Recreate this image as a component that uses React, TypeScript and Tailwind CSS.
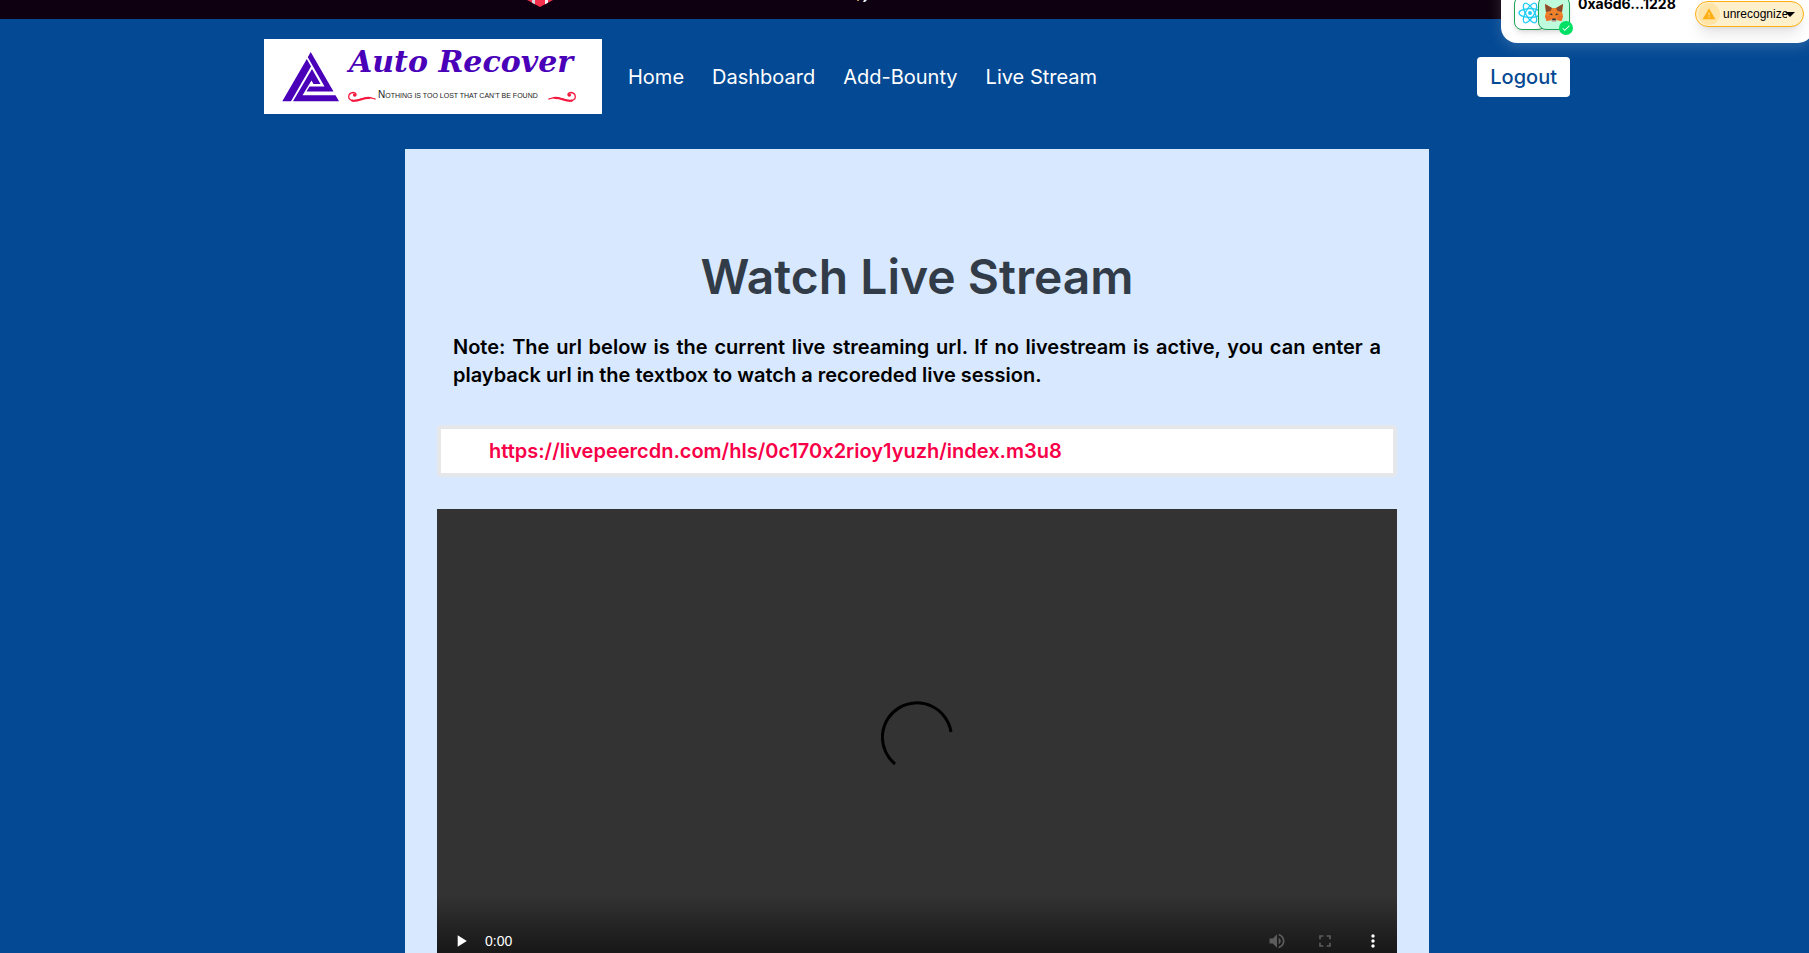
import React from "react";
import { MdPlayArrow, MdVolumeUp, MdFullscreen, MdMoreVert, MdArrowDropDown, MdCheck, MdWarning } from "react-icons/md";

const navItems = ["Home", "Dashboard", "Add-Bounty", "Live Stream"];

function Flourish({ flip = false }: { flip?: boolean }) {
  return (
    <g transform={flip ? "translate(396 0) scale(-1 1)" : undefined} fill="none" stroke="#f5183f" strokeLinecap="round">
      <path d="M91 57 C93 56 92 53.500 89 53.500 C84 54 83 60 88 61.500 C94 63 98 58.500 104 58.500 C107 58.500 109 59.500 111 60" strokeWidth="1.300" />
      <path d="M88 61.500 C94 63 98 58.800 105 59" strokeWidth="2.200" />
      <circle cx="90.500" cy="56" r="1.600" fill="#f5183f" stroke="none" />
    </g>
  );
}

function Logo() {
  return (
    <svg viewBox="0 0 338 75" className="block h-[75px] w-[338px] shrink-0" role="img" aria-label="Auto Recover">
      <rect width="338" height="75" fill="#fff" />
      <g fill="#4a00b8">
        <path d="M18.300 62.300 L42.800 20 L47 27.500 L27 62.300 Z" />
        <path d="M46.700 13 L69.500 52.500 H42.500 L45.500 47.500 H60.500 L43.800 18.200 Z" />
        <path d="M75 62.300 H29 L48 30 L56.500 45 H49.500 L47.500 41.500 L38.500 56.200 H71.500 Z" />
      </g>
      <text x="85" y="33" fontFamily="'DejaVu Serif', serif" fontStyle="italic" fontWeight="700" fontSize="30" fill="#4a00b8">
        Auto Recover
      </text>
      <Flourish />
      <Flourish flip />
      <text x="114" y="59" fontFamily="'Liberation Sans', Arial, sans-serif" fontSize="7" fill="#222">
        <tspan fontSize="10">N</tspan>OTHING IS TOO LOST THAT CAN'T BE FOUND
      </text>
    </svg>
  );
}

function ReactMark() {
  return (
    <svg viewBox="0 0 24 24" className="size-6" fill="none" stroke="#1fcdf5" strokeWidth="1.300">
      <ellipse cx="12" cy="12" rx="11" ry="4.300" />
      <ellipse cx="12" cy="12" rx="11" ry="4.300" transform="rotate(60 12 12)" />
      <ellipse cx="12" cy="12" rx="11" ry="4.300" transform="rotate(120 12 12)" />
      <circle cx="12" cy="12" r="2" fill="#1fcdf5" stroke="none" />
    </svg>
  );
}

function Fox() {
  return (
    <svg viewBox="0 0 20 20" className="size-5">
      <path d="M1 1 L8 5 H12 L19 1 L18 9 L19 13 L17.500 18 L13 17 L11.500 19 H8.500 L7 17 L2.500 18 L1 13 L2 9 Z" fill="#f0812b" />
      <path d="M1 1 L8 5 L6.500 8 L2 9 Z M19 1 L12 5 L13.500 8 L18 9 Z" fill="#8a4a2c" />
      <path d="M1 13 L6 12.500 L7 17 L2.500 18 Z M19 13 L14 12.500 L13 17 L17.500 18 Z" fill="#e8722a" />
      <path d="M5 11 L8 10.500 L8.500 12.500 Z M15 11 L12 10.500 L11.500 12.500 Z" fill="#26303c" />
      <path d="M7 16.500 H13 L11.500 19 H8.500 Z" fill="#c9bdb2" />
      <path d="M8.500 15.500 H11.500 L12 17.200 H8 Z" fill="#26303c" />
    </svg>
  );
}

function WalletPanel() {
  return (
    <div className="absolute -top-[37px] -right-[5px] flex h-20 w-[313px] rounded-2xl bg-white pr-[10px] pb-[13px] pl-[13px] shadow-[0_4px_14px_rgba(255,255,255,0.16)]">
      <div className="relative flex items-end">
        <div className="flex h-[34px] w-8 items-center justify-center rounded-lg border border-[#1ba554] bg-white shadow-md">
          <ReactMark />
        </div>
        <div className="-ml-2 flex h-[34px] w-8 items-center justify-center rounded-lg border border-[#1ba554] bg-[#bdfbdc] shadow-md">
          <Fox />
        </div>
        <span className="absolute -right-[3px] -bottom-[5px] flex size-[14px] items-center justify-center rounded-full bg-[#00e064] text-white">
          <MdCheck size={10} />
        </span>
      </div>
      <div className="ml-2 flex grow items-end justify-between">
        <span className="pb-4 text-sm leading-5 font-bold text-black">0xa6d6...1228</span>
        <label className="mb-[3px] flex h-[26px] w-[109px] items-center rounded-full border border-[#ffae14] bg-[#fff0cc] pl-[2px] shadow-lg">
          <span className="flex size-[22px] shrink-0 items-center justify-center rounded-full bg-[#ffe4a6] text-[#ffae14]">
            <MdWarning size={14} />
          </span>
          <select
            aria-label="Network"
            className="ml-[3px] w-16 appearance-none overflow-hidden bg-transparent text-[12px] text-clip whitespace-nowrap text-black font-['Liberation_Sans',Arial,sans-serif]"
          >
            <option>unrecognized</option>
          </select>
          <MdArrowDropDown size={24} className="-ml-[9px] shrink-0 text-black" />
        </label>
      </div>
    </div>
  );
}

function PromoBar() {
  return (
    <div className="h-[19px] bg-[#0e0010]">
      <svg className="ml-[527px] block h-[7px] w-[340px]" viewBox="0 0 340 7" aria-hidden="true">
        <path d="M0 0 H26 L13 7 Z" fill="#f5304c" />
        <path d="M5 0 H8 V4.200 L5 2.700 Z" fill="#d8d3da" />
        <path d="M18 0 H21 V2.700 L18 4.200 Z" fill="#f3eef3" />
        <path d="M330 0 H332 V1 H330 Z" fill="#b98d5a" />
        <path d="M337 0 H340 L338 2 H336 Z" fill="#e6f0ff" />
      </svg>
    </div>
  );
}

function VideoPlayer() {
  return (
    <section aria-label="Video player" className="mt-8 flex h-[456px] flex-col bg-[#333]">
      <div className="flex grow items-center justify-center pt-[70px]">
        <svg viewBox="0 0 72 72" className="size-[72px]" fill="none" stroke="#000" strokeWidth="3">
          <path d="M70 31 A34.500 34.500 0 1 0 14 63" />
        </svg>
      </div>
      <div className="flex h-[70px] flex-col bg-linear-to-b from-[#333] to-[#121212] pt-[22px]">
        <div className="flex h-12 items-center">
          <button aria-label="Play" className="flex w-12 justify-center text-white"><MdPlayArrow size={20} /></button>
          <span className="text-sm text-white font-['Liberation_Sans',Arial,sans-serif]">0:00</span>
          <button aria-label="Mute" className="ml-auto flex w-12 justify-center text-[#5c5c5c]"><MdVolumeUp size={20} /></button>
          <button aria-label="Full screen" className="flex w-12 justify-center text-[#5c5c5c]"><MdFullscreen size={20} /></button>
          <button aria-label="More options" className="flex w-12 justify-center text-white"><MdMoreVert size={20} /></button>
        </div>
      </div>
    </section>
  );
}

export default function App() {
  return (
    <div className="relative h-screen overflow-hidden bg-[#044994] font-['Inter',sans-serif]">
      <PromoBar />
      <div className="pl-[25px]">
        <header className="mx-auto flex max-w-[1306px] items-center pt-5">
          <Logo />
          <nav className="flex gap-7 pl-[26px] text-xl text-white">
            {navItems.map((n) => (
              <a key={n} href="#">{n}</a>
            ))}
          </nav>
          <button className="ml-auto h-10 rounded bg-white px-[13px] text-xl font-medium text-[#044994]">Logout</button>
        </header>
        <main className="mx-auto mt-[35px] max-w-5xl bg-[#d7e8ff] px-8 pt-[104px]">
          <h1 className="text-center text-5xl leading-[48px] font-semibold text-[#323c48]">Watch Live Stream</h1>
          <p className="mt-8 px-4 text-justify text-xl font-semibold text-black">
            Note: The url below is the current live streaming url. If no livestream is active, you can enter a playback url in the
            textbox to watch a recoreded live session.
          </p>
          <input
            aria-label="Playback url"
            defaultValue="https://livepeercdn.com/hls/0c170x2rioy1yuzh/index.m3u8"
            className="mt-9 block h-[52px] w-full rounded border-4 border-gray-200 bg-white px-12 text-xl font-semibold text-[#f80048] [font-feature-settings:'calt'_0]"
          />
          <VideoPlayer />
        </main>
      </div>
      <WalletPanel />
    </div>
  );
}
